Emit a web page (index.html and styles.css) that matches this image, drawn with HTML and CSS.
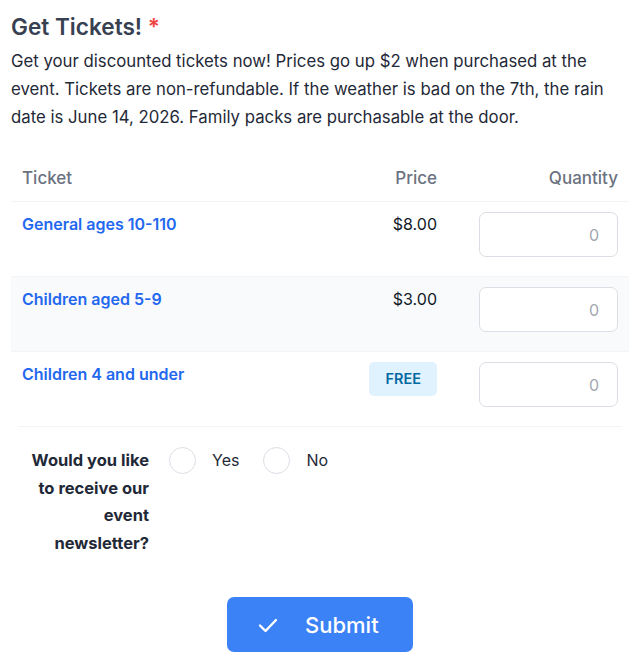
FILE: index.html
```html
<!DOCTYPE html>
<html lang="en">
<head>
<meta charset="utf-8">
<title>Get Tickets</title>
<link rel="stylesheet" href="styles.css">
</head>
<body>
<div class="form">
  <h2 class="title">Get Tickets! <span class="req">*</span></h2>
  <p class="desc">Get your discounted tickets now! Prices go up $2 when purchased at the event. Tickets are non-refundable. If the weather is bad on the 7th, the rain date is June 14, 2026. Family packs are purchasable at the door.</p>

  <table class="tickets">
    <thead>
      <tr>
        <th class="c-name">Ticket</th>
        <th class="c-price">Price</th>
        <th class="c-qty">Quantity</th>
      </tr>
    </thead>
    <tbody>
      <tr>
        <td class="c-name"><span class="tname">General ages 10-110</span></td>
        <td class="c-price"><span class="price">$8.00</span></td>
        <td class="c-qty"><input class="qty" type="text" placeholder="0"></td>
      </tr>
      <tr class="alt">
        <td class="c-name"><span class="tname">Children aged 5-9</span></td>
        <td class="c-price"><span class="price">$3.00</span></td>
        <td class="c-qty"><input class="qty" type="text" placeholder="0"></td>
      </tr>
      <tr>
        <td class="c-name"><span class="tname">Children 4 and under</span></td>
        <td class="c-price"><span class="badge">FREE</span></td>
        <td class="c-qty"><input class="qty" type="text" placeholder="0"></td>
      </tr>
    </tbody>
  </table>
  <div class="divider"></div>

  <div class="newsletter">
    <div class="nl-label">Would you like to receive our event newsletter?</div>
    <div class="options">
      <label class="opt"><span class="radio"></span><span>Yes</span></label>
      <label class="opt"><span class="radio"></span><span>No</span></label>
    </div>
  </div>

  <div class="actions">
    <button class="submit" type="button">
      <svg class="check" width="20" height="16" viewBox="0 0 20 16" fill="none"><path d="M2 8.5 L7.5 14 L18 3" stroke="#ffffff" stroke-width="2.4" stroke-linecap="round" stroke-linejoin="round"/></svg>
      <span>Submit</span>
    </button>
  </div>
</div>
</body>
</html>
```

FILE: styles.css
```css
* { box-sizing: border-box; }
html, body { margin: 0; padding: 0; background: #ffffff; }
body {
  font-family: Inter, "Noto Sans", "Liberation Sans", sans-serif;
  color: #1f2937;
  font-size: 16px;
}
.form { padding: 13px 11px 16px 11px; }
.title {
  margin: 0;
  font-size: 22.6px;
  line-height: 28px;
  font-weight: 600;
  color: #374151;
}
.req { color: #ef4444; }
.desc {
  margin: 6px 0 0 0;
  font-size: 16.75px;
  line-height: 28px;
  color: #1f2937;
}
.tickets {
  width: 100%;
  margin-top: 24px;
  border-collapse: collapse;
}
.tickets th {
  font-size: 17px;
  font-weight: 500;
  color: #6b7280;
  line-height: 24px;
  padding: 11px 11px;
  text-align: left;
}
.tickets td {
  padding: 10px 11px 19px 11px;
  vertical-align: top;
  border-top: 1px solid #f3f4f6;
  line-height: 24px;
}
.tickets .c-price { text-align: right; width: 120px; }
.tickets .c-qty { text-align: right; width: 181px; }
.alt td { background: #f9fafb; }
.tname { color: #2368ee; font-weight: 600; }
.price { color: #111827; display: inline-block; margin-top: -2px; }
.badge {
  display: inline-block;
  background: #e0f2fe;
  color: #0369a1;
  font-weight: 600;
  font-size: 14.5px;
  line-height: 20px;
  padding: 7px 16px;
  border-radius: 5px;
}
.qty {
  display: block;
  margin-left: auto;
  width: 139px;
  height: 45px;
  border: 1px solid #dcdee5;
  border-radius: 7px;
  background: #ffffff;
  font-family: inherit;
  font-size: 16px;
  text-align: right;
  padding: 0 18px;
  color: #111827;
}
.qty::placeholder { color: #a3a7ae; }
.divider {
  height: 1px;
  background: #f3f4f6;
  margin: 0 7px;
}
.newsletter {
  display: flex;
  margin-top: 20px;
  padding-left: 7px;
}
.nl-label {
  width: 131px;
  text-align: right;
  font-size: 16.5px;
  font-weight: 700;
  line-height: 27.5px;
  color: #1f2937;
}
.options {
  display: flex;
  gap: 24px;
  margin-left: 20px;
  padding-top: 0;
}
.opt {
  display: flex;
  align-items: flex-start;
  gap: 16px;
  line-height: 27px;
  color: #1f2937;
}
.radio {
  width: 27px;
  height: 27px;
  border: 1px solid #dcdee5;
  border-radius: 50%;
  background: #ffffff;
}
.actions {
  display: flex;
  justify-content: center;
  margin-top: 40px;
}
.submit {
  display: flex;
  align-items: center;
  gap: 27px;
  height: 55px;
  width: 186px;
  padding: 0 0 0 31px;
  background: #3b82f6;
  border: none;
  border-radius: 7px;
  color: #ffffff;
  font-family: inherit;
  font-size: 22px;
  font-weight: 500;
}
.check { display: block; }
```
